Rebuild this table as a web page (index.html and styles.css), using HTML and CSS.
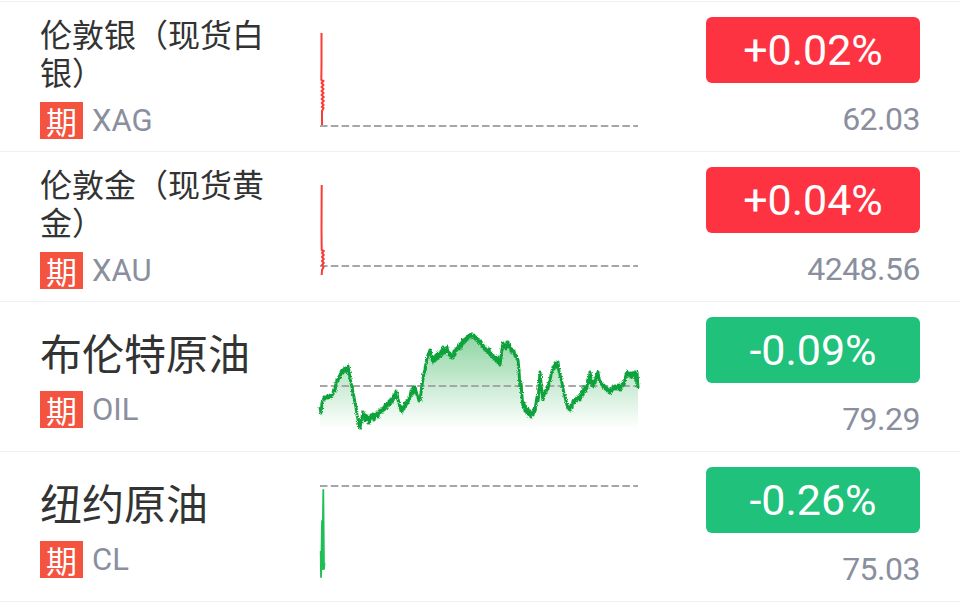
FILE: index.html
```html
<!DOCTYPE html>
<html lang="zh-CN">
<head>
    <meta charset="UTF-8">
    <meta name="viewport" content="width=device-width, initial-scale=1.0">
    <title>期货行情</title>
    <link rel="stylesheet" href="styles.css">
</head>
<body>

<div class="list">
    <!-- 伦敦银 -->
    <div class="row">
        <div class="info">
            <div class="name"><span>伦敦银（现货白银）</span></div>
            <div class="code"><span class="tag">期</span><span class="sym">XAG</span></div>
        </div>
        <div class="chart">
            <svg width="318" height="100" viewBox="0 0 318 100">
                <line class="base" x1="0" y1="95" x2="318" y2="95"/>
                <path class="line red" d="M1.5,2 L1.5,34 L1.3,49 L3.5,50 L1.5,52 L3.5,54 L1.5,56 L3.6,58 L1.5,60 L3.6,62 L1.5,64 L3.8,66 L1.6,68 L3.8,70 L1.8,72 L3.6,74 L1.8,76 L3.6,77 L2,80 L2,94"/>
            </svg>
        </div>
        <div class="quote">
            <div class="pill up">+0.02%</div>
            <div class="price">62.03</div>
        </div>
    </div>

    <!-- 伦敦金 -->
    <div class="row">
        <div class="info">
            <div class="name"><span>伦敦金（现货黄金）</span></div>
            <div class="code"><span class="tag">期</span><span class="sym">XAU</span></div>
        </div>
        <div class="chart">
            <svg width="318" height="100" viewBox="0 0 318 100">
                <line class="base" x1="0" y1="85" x2="318" y2="85"/>
                <path class="line red" d="M1.7,4 L1.5,47 L1.7,69 L3.8,70 L2,72 L3.8,74 L2,76 L3.8,78 L2,80 L3.8,82 L2,84 L3.6,86 L2,89 L1.7,94"/>
            </svg>
        </div>
        <div class="quote">
            <div class="pill up">+0.04%</div>
            <div class="price">4248.56</div>
        </div>
    </div>

    <!-- 布伦特原油 -->
    <div class="row">
        <div class="info">
            <div class="name big"><span>布伦特原油</span></div>
            <div class="code"><span class="tag">期</span><span class="sym">OIL</span></div>
        </div>
        <div class="chart">
            <svg width="318" height="100" viewBox="0 0 318 100">
                <defs>
                    <linearGradient id="oilFill" x1="0" y1="0" x2="0" y2="1">
                        <stop offset="0" stop-color="#12a63c" stop-opacity="0.48"/>
                        <stop offset="1" stop-color="#12a63c" stop-opacity="0"/>
                    </linearGradient>
                    <filter id="jitter" x="-5%" y="-10%" width="110%" height="120%">
                        <feTurbulence type="fractalNoise" baseFrequency="0.8" numOctaves="1" seed="4" result="noise"/>
                        <feDisplacementMap in="SourceGraphic" in2="noise" scale="3.5" xChannelSelector="R" yChannelSelector="G"/>
                    </filter>
                </defs>
                <path class="area" fill="url(#oilFill)" d="M0,76 L1,82 L2,72 L3,70 L4,66 L5,68 L7,65 L8,67 L10,64 L11,66 L13,63 L14,58 L15,60 L16,52 L17,49 L18,50 L19,45 L20,46 L21,41 L22,39 L23,42 L24,38 L25,40 L26,37 L27,41 L28,35 L29,40 L30,47 L31,52 L32,56 L33,62 L34,66 L35,72 L36,76 L37,84 L38,88 L39,94 L40,97 L41,90 L42,86 L43,81 L44,86 L45,90 L46,84 L47,88 L48,86 L49,92 L50,89 L51,84 L52,87 L53,83 L54,89 L55,86 L56,82 L57,84 L58,86 L59,80 L60,82 L61,78 L62,81 L63,77 L64,79 L65,74 L66,78 L67,72 L68,75 L69,70 L70,74 L71,68 L72,71 L73,69 L74,64 L75,67 L76,60 L77,62 L78,68 L79,72 L80,76 L81,80 L82,81 L83,76 L84,78 L85,72 L86,75 L87,70 L88,72 L89,68 L90,66 L91,60 L92,64 L93,56 L94,62 L95,56 L96,60 L97,64 L98,66 L99,70 L100,69 L101,62 L102,54 L103,48 L104,42 L105,39 L106,32 L107,28 L108,24 L109,22 L110,19 L111,24 L112,28 L113,31 L114,26 L115,30 L116,24 L117,28 L118,22 L119,27 L120,24 L121,20 L122,24 L123,16 L124,22 L125,18 L126,20 L127,16 L128,20 L129,24 L130,22 L131,27 L132,24 L133,27 L134,20 L135,24 L136,18 L137,19 L138,16 L139,14 L140,18 L141,12 L142,14 L143,9 L144,12 L145,8 L146,10 L147,6 L148,8 L149,4 L150,6 L151,3 L152,4 L153,6 L154,4 L155,8 L156,6 L157,10 L158,8 L159,12 L160,12 L161,10 L162,15 L163,14 L164,18 L165,16 L166,20 L167,19 L168,22 L169,18 L170,24 L171,22 L172,26 L173,24 L174,28 L175,26 L176,30 L177,31 L178,26 L179,32 L180,34 L181,26 L182,18 L183,12 L184,16 L185,14 L186,18 L187,11 L188,11 L189,16 L190,14 L191,20 L192,18 L193,22 L194,20 L195,25 L196,24 L197,28 L198,29 L199,40 L200,56 L201,52 L202,66 L203,76 L204,72 L205,80 L206,76 L207,82 L208,78 L209,84 L210,80 L211,86 L212,82 L213,84 L214,78 L215,80 L216,72 L217,66 L218,70 L219,56 L220,41 L221,52 L222,62 L223,69 L224,64 L225,60 L226,62 L227,56 L228,58 L229,52 L230,50 L231,44 L232,40 L233,36 L234,38 L235,32 L236,36 L237,34 L238,31 L239,40 L240,44 L241,48 L242,52 L243,58 L244,62 L245,66 L246,70 L247,74 L248,78 L249,76 L250,79 L251,74 L252,76 L253,70 L254,72 L255,68 L256,70 L257,66 L258,68 L259,66 L260,69 L261,62 L262,60 L263,64 L264,56 L265,58 L266,60 L267,56 L268,48 L269,52 L270,41 L271,48 L272,54 L273,56 L274,50 L275,52 L276,46 L277,44 L278,41 L279,48 L280,50 L281,52 L282,54 L283,56 L284,54 L285,58 L286,56 L287,60 L288,58 L289,62 L290,62 L291,58 L292,60 L293,56 L294,58 L295,55 L296,58 L297,56 L298,58 L299,54 L300,59 L301,55 L302,56 L303,52 L304,54 L305,48 L306,44 L307,41 L308,44 L309,42 L310,46 L311,42 L312,46 L313,42 L314,44 L315,41 L316,50 L317,41 L318,57 L318,98 L0,98 Z"/>
                <line class="base" x1="0" y1="55" x2="318" y2="55"/>
                <path class="line green" filter="url(#jitter)" d="M0,76 L1,82 L2,72 L3,70 L4,66 L5,68 L7,65 L8,67 L10,64 L11,66 L13,63 L14,58 L15,60 L16,52 L17,49 L18,50 L19,45 L20,46 L21,41 L22,39 L23,42 L24,38 L25,40 L26,37 L27,41 L28,35 L29,40 L30,47 L31,52 L32,56 L33,62 L34,66 L35,72 L36,76 L37,84 L38,88 L39,94 L40,97 L41,90 L42,86 L43,81 L44,86 L45,90 L46,84 L47,88 L48,86 L49,92 L50,89 L51,84 L52,87 L53,83 L54,89 L55,86 L56,82 L57,84 L58,86 L59,80 L60,82 L61,78 L62,81 L63,77 L64,79 L65,74 L66,78 L67,72 L68,75 L69,70 L70,74 L71,68 L72,71 L73,69 L74,64 L75,67 L76,60 L77,62 L78,68 L79,72 L80,76 L81,80 L82,81 L83,76 L84,78 L85,72 L86,75 L87,70 L88,72 L89,68 L90,66 L91,60 L92,64 L93,56 L94,62 L95,56 L96,60 L97,64 L98,66 L99,70 L100,69 L101,62 L102,54 L103,48 L104,42 L105,39 L106,32 L107,28 L108,24 L109,22 L110,19 L111,24 L112,28 L113,31 L114,26 L115,30 L116,24 L117,28 L118,22 L119,27 L120,24 L121,20 L122,24 L123,16 L124,22 L125,18 L126,20 L127,16 L128,20 L129,24 L130,22 L131,27 L132,24 L133,27 L134,20 L135,24 L136,18 L137,19 L138,16 L139,14 L140,18 L141,12 L142,14 L143,9 L144,12 L145,8 L146,10 L147,6 L148,8 L149,4 L150,6 L151,3 L152,4 L153,6 L154,4 L155,8 L156,6 L157,10 L158,8 L159,12 L160,12 L161,10 L162,15 L163,14 L164,18 L165,16 L166,20 L167,19 L168,22 L169,18 L170,24 L171,22 L172,26 L173,24 L174,28 L175,26 L176,30 L177,31 L178,26 L179,32 L180,34 L181,26 L182,18 L183,12 L184,16 L185,14 L186,18 L187,11 L188,11 L189,16 L190,14 L191,20 L192,18 L193,22 L194,20 L195,25 L196,24 L197,28 L198,29 L199,40 L200,56 L201,52 L202,66 L203,76 L204,72 L205,80 L206,76 L207,82 L208,78 L209,84 L210,80 L211,86 L212,82 L213,84 L214,78 L215,80 L216,72 L217,66 L218,70 L219,56 L220,41 L221,52 L222,62 L223,69 L224,64 L225,60 L226,62 L227,56 L228,58 L229,52 L230,50 L231,44 L232,40 L233,36 L234,38 L235,32 L236,36 L237,34 L238,31 L239,40 L240,44 L241,48 L242,52 L243,58 L244,62 L245,66 L246,70 L247,74 L248,78 L249,76 L250,79 L251,74 L252,76 L253,70 L254,72 L255,68 L256,70 L257,66 L258,68 L259,66 L260,69 L261,62 L262,60 L263,64 L264,56 L265,58 L266,60 L267,56 L268,48 L269,52 L270,41 L271,48 L272,54 L273,56 L274,50 L275,52 L276,46 L277,44 L278,41 L279,48 L280,50 L281,52 L282,54 L283,56 L284,54 L285,58 L286,56 L287,60 L288,58 L289,62 L290,62 L291,58 L292,60 L293,56 L294,58 L295,55 L296,58 L297,56 L298,58 L299,54 L300,59 L301,55 L302,56 L303,52 L304,54 L305,48 L306,44 L307,41 L308,44 L309,42 L310,46 L311,42 L312,46 L313,42 L314,44 L315,41 L316,50 L317,41 L318,57"/>
            </svg>
        </div>
        <div class="quote">
            <div class="pill down">-0.09%</div>
            <div class="price">79.29</div>
        </div>
    </div>

    <!-- 纽约原油 -->
    <div class="row">
        <div class="info">
            <div class="name big"><span>纽约原油</span></div>
            <div class="code"><span class="tag">期</span><span class="sym">CL</span></div>
        </div>
        <div class="chart">
            <svg width="318" height="100" viewBox="0 0 318 100">
                <line class="base" x1="0" y1="5" x2="318" y2="5"/>
                <path class="line green-lite" d="M0.7,70 L1,96 L1.5,72 L2,40 L2.5,88 L3,32 L3.3,9 L4,88 L4.5,82"/>
            </svg>
        </div>
        <div class="quote">
            <div class="pill down">-0.26%</div>
            <div class="price">75.03</div>
        </div>
    </div>
</div>

</body>
</html>
```

FILE: styles.css
```css
body {
    margin: 0;
    padding-top: 1px;
    background-color: #fff;
    font-family: Roboto, "Noto Sans CJK SC", sans-serif;
}
.list {
    border-bottom: 1px solid #efeff5;
}
.row {
    display: grid;
    grid-template-columns: 240px 318px 1fr;
    column-gap: 40px;
    height: 150px;
    padding: 0 40px;
    box-sizing: border-box;
    border-top: 1px solid #efeff5;
}
.info {
    display: flex;
    flex-direction: column;
    justify-content: center;
}
.name {
    font-family: "Noto Sans CJK SC", sans-serif;
    font-size: 32px;
    line-height: 38px;
    color: #333;
}
.name.big {
    font-size: 42px;
    line-height: 54px;
}
.code {
    display: flex;
    align-items: center;
    gap: 9px;
    margin-top: 12px;
}
.tag {
    width: 43px;
    height: 37px;
    background-color: #f4533f;
    color: white;
    font-family: "Noto Sans CJK SC", sans-serif;
    font-size: 31px;
    line-height: 37px;
    text-align: center;
}
.sym {
    font-family: Roboto, sans-serif;
    font-size: 31px;
    color: #8a8f9e;
}
.chart {
    padding-top: 29px;
}
.chart svg {
    display: block;
    overflow: visible;
}
.base {
    stroke: #a6a6a6;
    stroke-width: 2;
    stroke-dasharray: 7.5 3.3;
}
.line {
    fill: none;
    stroke-width: 2;
    stroke-linejoin: round;
}
.line.red {
    stroke: #fa3b36;
    stroke-width: 2;
}
.line.green {
    stroke: #10a23a;
    stroke-width: 3;
}
.line.green-lite {
    stroke: #1fbf55;
    stroke-width: 1.8;
}
.quote {
    display: flex;
    flex-direction: column;
    align-items: flex-end;
    padding-top: 15px;
}
.pill {
    width: 214px;
    height: 66px;
    border-radius: 6px;
    color: white;
    font-family: Roboto, sans-serif;
    font-size: 43px;
    line-height: 66px;
    text-align: center;
}
.pill.up {
    background-color: #fe3341;
}
.pill.down {
    background-color: #1fc17b;
}
.price {
    margin-top: 16px;
    font-family: Roboto, sans-serif;
    font-size: 32px;
    line-height: 40px;
    letter-spacing: -0.5px;
    color: #8a8f9e;
}
```
